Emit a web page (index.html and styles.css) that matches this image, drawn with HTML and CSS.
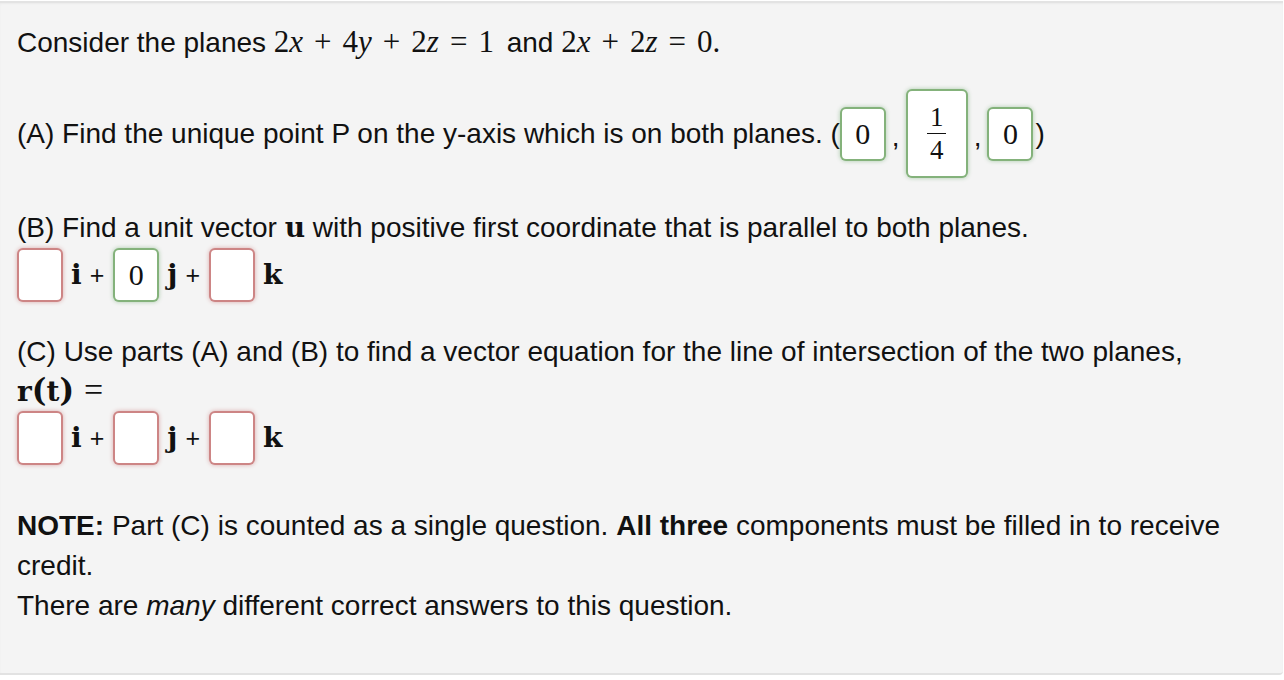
FILE: index.html
```html
<!DOCTYPE html>
<html lang="en">
<head>
  <meta charset="UTF-8">
  <title>Intersecting planes</title>
  <meta name="viewport" content="width=device-width, initial-scale=1.0">
  <link rel="stylesheet" href="styles.css">
</head>
<body>

  <div class="problem">

    <div class="line">Consider the planes <span class="math">2<i>x</i><span class="op">+</span>4<i>y</i><span class="op">+</span>2<i>z</i><span class="op">=</span>1</span> and <span class="math">2<i>x</i><span class="op">+</span>2<i>z</i><span class="op">=</span>0.</span></div>

    <!-- part A -->
    <div class="row row-a">
      <span class="txt">(A) Find the unique point P on the y-axis which is on both planes. (</span>
      <span class="ans ok">0</span>
      <span class="sep">,</span>
      <span class="ans ok frac-box">
        <span class="frac"><span class="num">1</span><span class="den">4</span></span>
      </span>
      <span class="sep">,</span>
      <span class="ans ok">0</span>
      <span class="txt close">)</span>
    </div>

    <!-- part B -->
    <div class="line line-b">(B) Find a unit vector <span class="vec">u</span> with positive first coordinate that is parallel to both planes.</div>
    <div class="row">
      <span class="ans bad"></span>
      <span class="vec unit">i</span><span class="plus">+</span>
      <span class="ans ok">0</span>
      <span class="vec unit">j</span><span class="plus">+</span>
      <span class="ans bad"></span>
      <span class="vec unit">k</span>
    </div>

    <!-- part C -->
    <div class="line line-c">(C) Use parts (A) and (B) to find a vector equation for the line of intersection of the two planes,</div>
    <div class="line line-rt"><span class="vec">r</span><span class="paren">(</span><span class="vec">t</span><span class="paren">)</span><span class="math eq">=</span></div>
    <div class="row row-c">
      <span class="ans bad"></span>
      <span class="vec unit">i</span><span class="plus">+</span>
      <span class="ans bad"></span>
      <span class="vec unit">j</span><span class="plus">+</span>
      <span class="ans bad"></span>
      <span class="vec unit">k</span>
    </div>

    <div class="note">
      <p class="note-line"><b>NOTE:</b> Part (C) is counted as a single question. <b>All three</b> components must be filled in to receive credit.</p>
      <p class="note-line">There are <i>many</i> different correct answers to this question.</p>
    </div>

  </div>

</body>
</html>
```

FILE: styles.css
```css
html, body {
  margin: 0;
  padding: 0;
  background: #fff;
}
body {
  padding-top: 1px;
}
.problem {
  background-color: #f4f4f4;
  border-top: 2px solid #e3e3e3;
  border-bottom: 2px solid #e2e2e2;
  border-bottom-right-radius: 4px;
  box-shadow: inset 0 1px 2px rgba(0,0,0,0.04);
  color: #111;
  font-family: "Liberation Sans", Arial, Helvetica, sans-serif;
  font-size: 28px;
  height: 625px;
  line-height: 40px;
  margin-right: 1px;
  padding: 19px 0 26px 17px;
}
.line{
  height: 40px;
  white-space: nowrap;
}
.math{
  font-family: "Liberation Serif", "Times New Roman", serif;
  font-size: 31px;
  margin: 0 5px 0 0;
}
.math i{
  font-style: italic;
}
.op{
  margin: 0 11px;
}
.row{
  align-items: center;
  display: flex;
  height: 54px;
}
.row-a{
  height: 89px;
  margin-top: 27px;
}
.txt{
  white-space: pre;
}
.close{
  margin-left: 2px;
}
.sep{
  margin: 6px 6px 0 6px;
}
.ans{
  align-items: center;
  background: #fff;
  border: 2px solid;
  border-radius: 6px;
  box-sizing: border-box;
  display: inline-flex;
  font-family: "Liberation Serif", "Times New Roman", serif;
  font-size: 30px;
  height: 54px;
  justify-content: center;
  width: 46px;
}
.ok{
  border-color: rgba(110,165,100,0.85);
  box-shadow: 0 0 4px rgba(81,153,81,0.45);
}
.bad{
  border-color: rgba(196,112,112,0.85);
  box-shadow: 0 0 4px rgba(191,84,84,0.45);
}
.frac-box{
  height: 89px;
  width: 62px;
}
.frac{
  display: inline-flex;
  flex-direction: column;
  align-items: center;
  font-size: 27px;
  line-height: 28px;
}
.num{
  border-bottom: 1px solid #111;
  padding: 0 3px 2px;
}
.den{
  padding-top: 2px;
}
.line-b{
  margin-top: 30px;
}
.vec{
  font-family: "DejaVu Serif", "Liberation Serif", serif;
  font-weight: bold;
  font-size: 28px;
}
.unit{
  margin: 0 0 0 8px;
}
.plus{
  margin: 0 9px 0 8px;
  font-size: 25px;
}
.line-c{
  margin-top: 30px;
}
.line-rt{
  height: 36px;
  line-height: 36px;
}
.paren{
  font-family: "DejaVu Serif", serif;
  font-weight: bold;
  font-size: 31px;
}
.eq{
  font-size: 34px;
  margin-left: 10px;
}
.row-c{
  margin-top: 3px;
}
.note{
  margin-top: 41px;
  width: 1240px;
}
.note-line{
  margin: 0;
}
```
